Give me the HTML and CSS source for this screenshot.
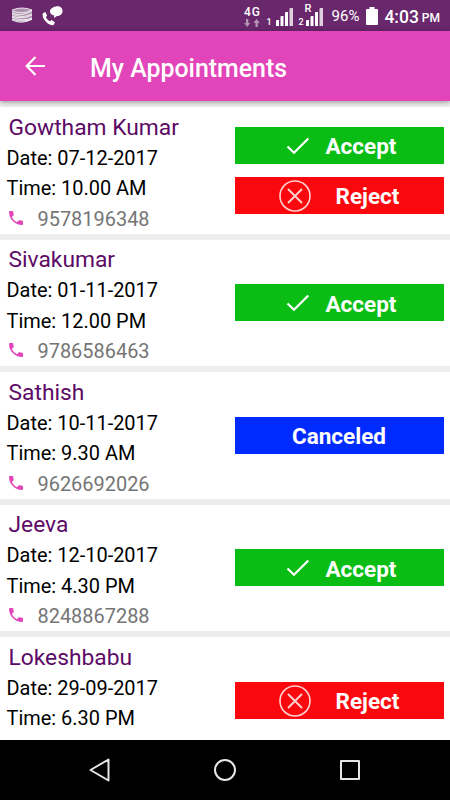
FILE: index.html
```html
<!DOCTYPE html>
<html lang="en">
<head>
  <meta charset="UTF-8" />
  <meta name="viewport" content="width=device-width, initial-scale=1.0"/>
  <title>My Appointments</title>
  <link rel="stylesheet" href="styles.css">
</head>
<body>
  <!-- shared icons -->
  <svg class="defs" width="0" height="0">
    <symbol id="phone" viewBox="3 3 18 18"><path d="M6.62 10.79c1.44 2.83 3.76 5.14 6.59 6.59l2.2-2.2c.27-.27.67-.36 1.02-.24 1.12.37 2.33.57 3.57.57.55 0 1 .45 1 1V20c0 .55-.45 1-1 1C10.61 21 3 13.39 3 4c0-.55.45-1 1-1h3.5c.55 0 1 .45 1 1 0 1.25.2 2.45.57 3.57.11.35.03.74-.25 1.02z"/></symbol>
    <symbol id="check" viewBox="0 0 24 18"><path d="M1.5 9.5l6.5 6.3L22.3 1.5" fill="none" stroke="currentColor" stroke-width="2.2"/></symbol>
    <symbol id="cross" viewBox="0 0 32 32"><g fill="none" stroke="currentColor" stroke-width="1.6"><circle cx="16" cy="16" r="15"/><path d="M9.5 9.5l13 13M22.5 9.5l-13 13" stroke-width="1.9" stroke-linecap="round"/></g></symbol>
    <symbol id="signal" viewBox="0 0 17 18"><path d="M0 13q0-1 1-1h2v6H0zM4.5 9q0-1 1-1h2v10h-3zM9 5q0-1 1-1h2v14H9z" fill="#fff"/><path d="M13.5 1q0-1 1-1H17v18h-3.5z" fill="#ded0de"/></symbol>
  </svg>

  <div class="status-bar">
    <svg class="coil" viewBox="0 0 22 16" fill="none">
      <path d="M1 3Q11-1 21 3v10q-10 4-20 0z" fill="#ad8fae"/>
      <path d="M1 3Q11-1 21 3M1 4q10 4 20-1M1 6q10 4 20-2M1 7q10 5 20 0M1 9q10 4 20-1M1 10q10 5 20 1M1 12q10 4 20 0M1 13q10 5 20-1" stroke="#fff" stroke-width=".8"/>
    </svg>
    <svg class="call" viewBox="0 0 21 20" fill="#fff">
      <path d="M14 .5c3.500-.8 6.500 1.200 6.500 4.500s-2.700 5-5.500 5l-3 2 .2-2.600C6.500 8.500 6 2 14 .5z"/>
      <path d="M.8 7.300l2.600-1.200 1.800 3.700-1.400 1.300c.8 2 2.200 3.300 4.200 4.200l1.500-1.200 3.400 2.100-1.100 2.500C8.500 21-.8 14 .8 7.300z"/>
    </svg>
    <div class="status-right">
      <div class="network">
        <span>4G</span>
        <svg width="16" height="8" viewBox="0 0 16 8" fill="#b594b4"><path d="M2 0h2.300v4H6.200L3.200 8 .2 4H2zM11.500 8h2.300V4h2L12.600 0 9.400 4h2.100z"/></svg>
      </div>
      <span class="sim">1</span>
      <svg class="signal"><use href="#signal"/></svg>
      <div class="sim-roaming"><span class="roaming">R</span><span class="sim">2</span></div>
      <svg class="signal"><use href="#signal"/></svg>
      <span class="percent">96%</span>
      <svg class="battery" viewBox="0 0 12 18"><path d="M3.500 0h5v2H11q1 0 1 1v14q0 1-1 1H1q-1 0-1-1V3q0-1 1-1h2.500z" fill="#fff"/></svg>
      <span class="clock">4:03</span><span class="pm">PM</span>
    </div>
  </div>

  <div class="toolbar">
    <svg class="back" viewBox="0 0 20 20" fill="none" stroke="#fff" stroke-width="2.200"><path d="M10.500 1L1.700 10l8.800 9M1.700 10H20"/></svg>
    <h1>My Appointments</h1>
  </div>

  <div class="list">
    <div class="card">
      <div class="info">
        <h2>Gowtham Kumar</h2>
        <p>Date: 07-12-2017</p>
        <p>Time: 10.00 AM</p>
        <p class="phone"><svg><use href="#phone"/></svg>9578196348</p>
      </div>
      <div class="actions">
        <button class="accept"><svg><use href="#check"/></svg>Accept</button>
        <button class="reject"><svg><use href="#cross"/></svg>Reject</button>
      </div>
    </div>
    <div class="card">
      <div class="info">
        <h2>Sivakumar</h2>
        <p>Date: 01-11-2017</p>
        <p>Time: 12.00 PM</p>
        <p class="phone"><svg><use href="#phone"/></svg>9786586463</p>
      </div>
      <div class="actions">
        <button class="accept"><svg><use href="#check"/></svg>Accept</button>
      </div>
    </div>
    <div class="card">
      <div class="info">
        <h2>Sathish</h2>
        <p>Date: 10-11-2017</p>
        <p>Time: 9.30 AM</p>
        <p class="phone"><svg><use href="#phone"/></svg>9626692026</p>
      </div>
      <div class="actions">
        <button class="canceled">Canceled</button>
      </div>
    </div>
    <div class="card">
      <div class="info">
        <h2>Jeeva</h2>
        <p>Date: 12-10-2017</p>
        <p>Time: 4.30 PM</p>
        <p class="phone"><svg><use href="#phone"/></svg>8248867288</p>
      </div>
      <div class="actions">
        <button class="accept"><svg><use href="#check"/></svg>Accept</button>
      </div>
    </div>
    <div class="card">
      <div class="info">
        <h2>Lokeshbabu</h2>
        <p>Date: 29-09-2017</p>
        <p>Time: 6.30 PM</p>
      </div>
      <div class="actions">
        <button class="reject"><svg><use href="#cross"/></svg>Reject</button>
      </div>
    </div>
  </div>

  <div class="nav-bar">
    <svg viewBox="0 0 24 24"><path d="M2.500 12L20.500 1.500v21z"/></svg>
    <svg viewBox="0 0 24 24"><circle cx="12" cy="12" r="10"/></svg>
    <svg viewBox="0 0 24 24"><path d="M3 3h18v18H3z"/></svg>
  </div>
</body>
</html>
```
FILE: styles.css
```css
* { box-sizing: border-box; }
body {
  margin: 0;
  height: 800px;
  display: flex;
  flex-direction: column;
  overflow: hidden;
  font-family: Roboto, sans-serif;
  background: #fff;
}
h1, h2, p { margin: 0; font-weight: 400; white-space: nowrap; }
svg { display: block; flex: none; }
.defs { display: none; }

.status-bar {
  height: 31px;
  flex: none;
  display: flex;
  align-items: center;
  padding: 0 10px 0 11px;
  background: #69276c;
  color: #fff;
}
.coil { width: 22px; height: 16px; margin-top: -1px; }
.call { width: 21px; height: 20px; margin-left: 9px; }
.status-right {
  margin-left: auto;
  height: 31px;
  display: flex;
  align-items: center;
}
.network {
  width: 18px;
  display: flex;
  flex-direction: column;
  align-items: center;
  gap: 1px;
  font-size: 12px;
  line-height: 11px;
  font-weight: 500;
  letter-spacing: 1px;
  margin: 2px 5px 0 0;
}
.sim {
  font-size: 9px;
  line-height: 9px;
  font-weight: 500;
  align-self: flex-end;
  margin: 0 4px 4px 0;
}
.signal { width: 17px; height: 18px; margin-top: 3px; }
.sim-roaming {
  height: 31px;
  width: 7px;
  display: flex;
  flex-direction: column;
  justify-content: space-between;
  margin-left: 6px;
}
.sim-roaming .sim { align-self: flex-start; }
.roaming {
  font-size: 11px;
  line-height: 10px;
  font-weight: 500;
  margin: 4px 0 0 6px;
}
.percent { font-size: 15px; margin: 1px 7px 0 9px; }
.battery { width: 12px; height: 18px; }
.clock { font-size: 17.5px; font-weight: 500; margin: 2px 3px 0 6px; }
.pm { font-size: 12px; font-weight: 500; margin-top: 5px; }

.toolbar {
  position: relative;
  height: 70px;
  flex: none;
  display: flex;
  align-items: center;
  padding-left: 25px;
  background: #e245b9;
  color: #fff;
  box-shadow: 0 1px 5px rgba(0, 0, 0, 0.4);
}
.back { width: 20px; height: 20px; }
.toolbar h1 {
  font-size: 24.9px;
  font-weight: 500;
  margin: 4px 0 0 45px;
}

.list { flex: 1; overflow: hidden; }
.card {
  height: 132.5px;
  display: flex;
  justify-content: space-between;
  padding: 0 6.5px;
  border-top: 6px solid #ededed;
}
.info { padding-top: 5.5px; }
.info h2 {
  font-size: 22.8px;
  line-height: 30px;
  padding-left: 2px;
  color: #5c0a66;
}
.info p {
  font-size: 19.95px;
  line-height: 30.7px;
  color: #000;
}
.info .phone {
  display: flex;
  align-items: center;
  color: #757575;
}
.phone svg {
  width: 14px;
  height: 14px;
  fill: #e245b9;
  margin: -3px 15px 0 2px;
}

.actions {
  width: 209px;
  display: flex;
  flex-direction: column;
  justify-content: center;
  gap: 13px;
}
.actions button {
  height: 37px;
  display: flex;
  align-items: center;
  padding: 2px 0 0;
  border: none;
  color: #fff;
  font-family: inherit;
  font-size: 22.5px;
  font-weight: 700;
}
.actions .accept { background: #09bd15; padding-left: 51px; }
.accept svg { width: 24px; height: 18px; margin: -1px 16px 0 0; }
.actions .reject { background: #fb080e; padding-left: 44px; }
.reject svg { width: 32px; height: 32px; margin: -1px 25px 0 0; color: #ffd0d0; }
.actions .canceled { background: #002bff; justify-content: center; }

.nav-bar {
  height: 60px;
  flex: none;
  display: flex;
  align-items: center;
  justify-content: center;
  gap: 101px;
  background: #000;
}
.nav-bar svg {
  width: 24px;
  height: 24px;
  fill: none;
  stroke: #e6e6e6;
  stroke-width: 2;
  stroke-linejoin: round;
}
```
